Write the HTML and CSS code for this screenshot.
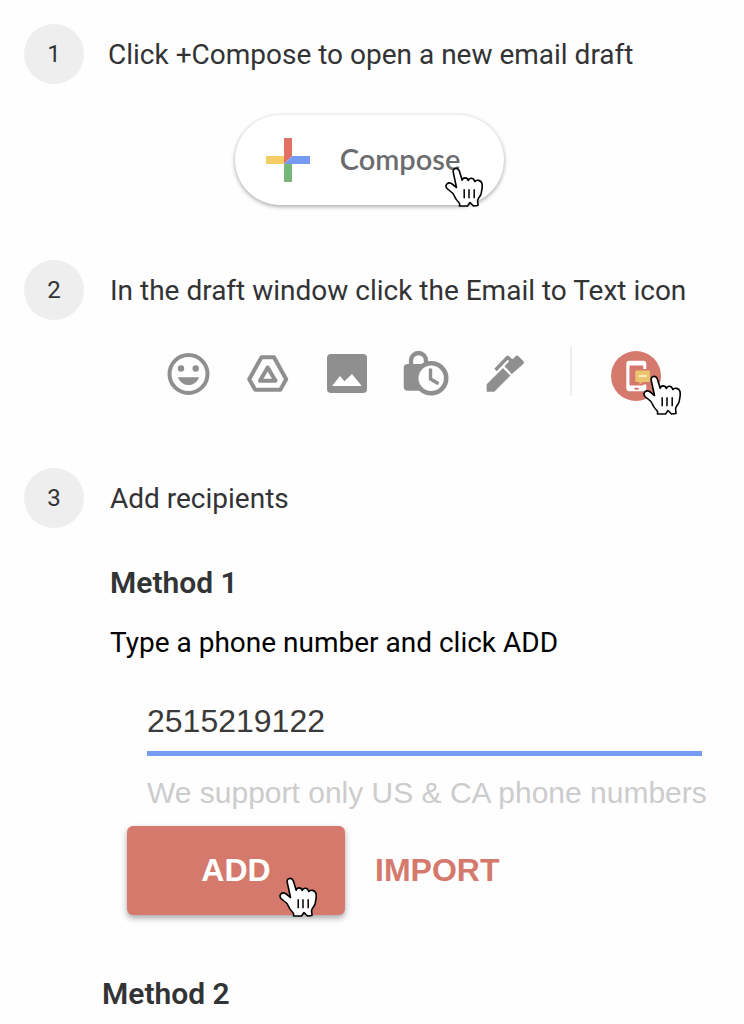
FILE: index.html
```html
<!DOCTYPE html>
<html lang="en">
<head>
<meta charset="utf-8">
<meta name="viewport" content="width=device-width, initial-scale=1">
<title>Email to Text guide</title>
<link rel="stylesheet" href="styles.css">
</head>
<body>
<svg class="defs" aria-hidden="true">
  <symbol id="hand" viewBox="0 0 40 41">
    <path d="M11.5 20.5 8.2 5.200C7.500 1.500 12.500-.2 14.200 3.600L17.200 13.200C17.800 10.200 22.200 10 23.300 13.400C24.300 10.300 28.600 10.500 29.800 14.400C31.500 12.300 36.200 13 37 16.500C37.800 20.500 36.700 24 36 27C35 30 32.800 31.500 32.600 33.500L33 38.500 28.500 39 25 35.500 22.500 39H14.500L14.600 36.500C11.500 33.500 9.500 30 8 26.500L2 21.500C-.8 18 3.200 14.800 6 16.300C8 17.300 9.500 19 11.500 20.500Z" fill="#fff" stroke="#000" stroke-width="1.600" stroke-linejoin="round"/>
    <path d="M19.200 22.300V31.200M24 22.300V31.200M29.200 22.300V31.200" stroke="#000" stroke-width="1.500"/>
  </symbol>
</svg>

<main class="guide">
  <section class="step step-first">
    <span class="num">1</span>
    <h2 class="title">Click +Compose to open a new email draft</h2>
  </section>
  <div class="compose-row">
    <button class="compose" type="button">
      <svg class="plus" viewBox="0 0 46 46" aria-hidden="true">
        <path d="M19 1H27V19L19 27Z" fill="#e27064"/>
        <path d="M1 19H19V27H1Z" fill="#f5cd66"/>
        <path d="M19 27H27V45H19Z" fill="#75b679"/>
        <path d="M27 19H45V27H19Z" fill="#769bf3"/>
      </svg>
      <span class="compose-label">Compose</span>
      <svg class="hand hand-compose" aria-hidden="true"><use href="#hand"/></svg>
    </button>
  </div>

  <section class="step">
    <span class="num">2</span>
    <h2 class="title">In the draft window click the Email to Text icon</h2>
  </section>
  <div class="toolbar">
    <button class="tool" type="button" aria-label="Insert emoji">
      <svg viewBox="0 0 48 48">
        <circle cx="24.500" cy="24" r="19" fill="none" stroke="#8f8f8f" stroke-width="4"/>
        <circle cx="17" cy="18.500" r="3.200" fill="#8f8f8f"/><circle cx="31.700" cy="18.500" r="3.200" fill="#8f8f8f"/>
        <path d="M14 27.200H35C33.500 31.800 29.500 35 24.500 35S15.500 31.800 14 27.200Z" fill="#8f8f8f"/>
      </svg>
    </button>
    <button class="tool" type="button" aria-label="Insert from Drive">
      <svg viewBox="0 0 48 48" fill="none" stroke="#8f8f8f" stroke-width="4" stroke-linejoin="round">
        <path d="M18.500 7.300H31L43.200 29.300 37.300 39.700H12.200L6.200 29.300Z"/>
        <path d="M24.700 17.500 17 30.700H32.500Z"/>
      </svg>
    </button>
    <button class="tool" type="button" aria-label="Insert photo">
      <svg viewBox="0 0 48 48">
        <rect x="5" y="4" width="40" height="39" rx="4" fill="#8f8f8f"/>
        <path d="M10 36 18 26 22.500 31.300 30 24 39.700 36Z" fill="#fff"/>
      </svg>
    </button>
    <button class="tool" type="button" aria-label="Confidential mode">
      <svg viewBox="0 0 48 48">
        <path d="M10 16V10.500A7.500 7.500 0 0 1 25 10.500V16" fill="none" stroke="#8f8f8f" stroke-width="4.300"/>
        <rect x="2.700" y="14" width="29" height="26.700" rx="4" fill="#8f8f8f"/>
        <circle cx="30.200" cy="28.300" r="15" fill="#fff" stroke="#8f8f8f" stroke-width="4.600"/>
        <path d="M29.500 18.500V29L37.500 33.800" fill="none" stroke="#8f8f8f" stroke-width="3.400"/>
      </svg>
    </button>
    <button class="tool" type="button" aria-label="Insert signature">
      <svg viewBox="0 0 48 48">
        <path d="M6.700 41.700V34.300L23 18 30.500 25.500 14.300 41.700Z" fill="#8f8f8f"/>
        <path d="M23.800 15.200 29 10 33.500 8.500 35.500 6.200Q37 5 38.500 6.200L43.300 11Q44.500 12.500 43.300 14L31.600 24.200Z" fill="#8f8f8f"/>
        <path d="M15.500 20 27.700 7.300 31.500 11" fill="none" stroke="#8f8f8f" stroke-width="3.500" stroke-linejoin="round"/>
        <path d="M22.500 16.200 31 24.700M22 17.500 28.500 11" stroke="#fff" stroke-width="1.600"/>
      </svg>
    </button>
    <span class="divider"></span>
    <button class="texting" type="button" aria-label="Email to Text">
      <svg class="phone" viewBox="0 0 50 50">
        <circle cx="25" cy="25" r="25" fill="#d4796c"/>
        <rect x="15.300" y="9.700" width="20" height="30.600" rx="3" fill="#fff"/>
        <path d="M18.500 14.500H32.300V18H36V33.500H32.300V34.500H18.500Z" fill="#d4796c"/>
        <rect x="23.300" y="36.800" width="4.500" height="2" rx="1" fill="#d4796c"/>
        <path d="M25.500 19.500H37.700Q38.900 19.500 38.900 20.700V29.700Q38.900 30.900 37.700 30.900H31.500L28.500 33.500V30.900H25.500Q24.300 30.900 24.300 29.700V20.700Q24.300 19.500 25.500 19.500Z" fill="#eac56d"/>
        <path d="M28 25H35.500" stroke="#fff" stroke-width="1.700" stroke-dasharray="2.200 .5"/>
      </svg>
      <svg class="hand hand-texting" aria-hidden="true"><use href="#hand"/></svg>
    </button>
  </div>

  <section class="step">
    <span class="num">3</span>
    <h2 class="title">Add recipients</h2>
  </section>
  <section class="method">
    <h3 class="method-title">Method 1</h3>
    <p class="text">Type a phone number and click ADD</p>
    <form class="form">
      <div class="field">
        <input class="input" type="text" value="2515219122" aria-label="Phone number" aria-describedby="help">
        <p class="help" id="help">We support only US &amp; CA phone numbers</p>
      </div>
      <div class="actions">
        <button class="add" type="button">ADD
          <svg class="hand hand-add" aria-hidden="true"><use href="#hand"/></svg>
        </button>
        <button class="import" type="button">IMPORT</button>
      </div>
    </form>
  </section>
  <section class="method method-next">
    <h3 class="method-title">Method 2</h3>
  </section>
</main>
</body>
</html>
```

FILE: styles.css
```css
* { box-sizing: border-box; }
body { margin: 0; background: #fefefe; color: #323335; font-family: Roboto, sans-serif; }
h2, h3, p { margin: 0; }
button { border: 0; padding: 0; background: none; font: inherit; color: inherit; }
.defs { position: absolute; width: 0; height: 0; }
.guide { padding: 24px 0 0; }
.step { display: flex; align-items: center; gap: 26px; padding: 0 24px; }
.step-first { gap: 24px; }
.num {
  display: flex; align-items: center; justify-content: center; flex: none;
  width: 60px; height: 60px; border-radius: 50%; background: #eee; font-size: 24px;
}
.title { padding-top: 2px; font-size: 28px; font-weight: 400; line-height: 36px; }

.hand { position: absolute; width: 40px; height: 41px; }

.compose-row { display: flex; justify-content: center; padding: 31px 5px 55px 0; }
.compose {
  position: relative; display: flex; align-items: center; gap: 29px;
  height: 90px; padding: 0 44px 0 30px; border-radius: 45px; background: #fff;
  color: #6b6c70; font-family: Lato, sans-serif; font-size: 29px; font-weight: 600;
  box-shadow: 0 2px 4px rgba(0, 0, 0, .28), 0 0 4px rgba(0, 0, 0, .1);
}
.compose-label { padding-bottom: 3px; }
.plus { width: 46px; height: 46px; }
.hand-compose { right: 19px; bottom: -3px; }

.toolbar { display: flex; align-items: center; gap: 31px; padding: 26px 0 66px 164px; }
.tool { width: 48px; height: 48px; }
.tool svg { display: block; width: 48px; height: 48px; }
.divider { width: 2px; height: 50px; margin: 0 8px 6px 11px; background: #eee; }
.texting { position: relative; width: 50px; height: 50px; margin-top: 4px; }
.phone { display: block; width: 50px; height: 50px; }
.hand-texting { left: 32px; top: 24px; }

.method { padding: 37px 42px 0 110px; }
.method-title { font-size: 30px; line-height: 36px; font-weight: 600; }
.text { margin-top: 23px; font-size: 28px; line-height: 38px; color: #000; }
.form { font-family: "Liberation Sans", Arial, sans-serif; }
.field { padding: 35px 0 0 37px; }
.input {
  display: block; width: 100%; height: 59px; padding: 0 0 6px; border: 0; border-bottom: 5px solid #769bf0;
  background: none; color: #3a3a3a; font: inherit; font-size: 32px; outline: 0;
}
.help { margin-top: 17px; font-size: 30px; line-height: 40px; color: #ccc; white-space: nowrap; }
.actions { display: flex; align-items: center; gap: 30px; margin: 13px 0 0 17px; font-size: 32px; font-weight: 700; }
.add {
  position: relative; width: 218px; height: 89px; border-radius: 6px; background: #d4796c; color: #fff;
  box-shadow: 0 3px 6px rgba(0, 0, 0, .35);
}
.hand-add { right: 26px; bottom: -3px; }
.import { color: #d4796c; }
.method-next { padding: 61px 42px 0 102px; }
```
